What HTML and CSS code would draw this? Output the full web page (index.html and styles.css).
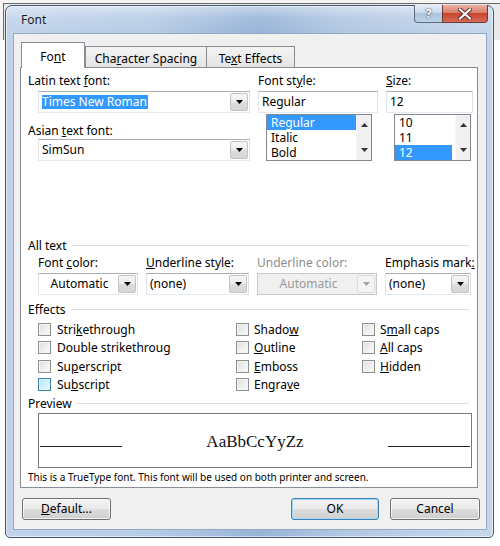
FILE: index.html
```html
<!DOCTYPE html>
<html>
<head>
<meta charset="utf-8">
<title>Font</title>
<link rel="stylesheet" href="styles.css">
</head>
<body>
<div class="behind"></div>
<div class="window">
  <div class="titlebar">
    <span class="title">Font</span>
    <div class="caps">
      <div class="cap help"><span>?</span></div>
      <div class="cap close">
        <svg width="14" height="12" viewBox="0 0 14 12"><path d="M2 1.5L12 10.5M12 1.5L2 10.5" stroke="#5a2a24" stroke-width="4" stroke-linecap="square"/><path d="M2 1.5L12 10.5M12 1.5L2 10.5" stroke="#fff" stroke-width="2.2" stroke-linecap="square"/></svg>
      </div>
    </div>
  </div>
  <div class="client">
    <div class="tabs">
      <div class="tab active">Fo<u>n</u>t</div>
      <div class="tab">Cha<u>r</u>acter Spacing</div>
      <div class="tab tab-last">Te<u>x</u>t Effects</div>
    </div>
    <div class="page">
      <div class="top-grid">
        <div class="col">
          <div class="lbl">Latin text <u>f</u>ont:</div>
          <div class="combo combo-indent">
            <div class="val"><span class="sel">Times New Roman</span></div>
            <div class="dd"><svg width="7" height="4" viewBox="0 0 7 4"><path d="M0 0h7L3.5 4z" fill="#000"/></svg></div>
          </div>
          <div class="lbl lbl-gap">Asian <u>t</u>ext font:</div>
          <div class="combo combo-indent combo-tight">
            <div class="val">SimSun</div>
            <div class="dd"><svg width="7" height="4" viewBox="0 0 7 4"><path d="M0 0h7L3.5 4z" fill="#000"/></svg></div>
          </div>
        </div>
        <div class="col">
          <div class="lbl">Font st<u>y</u>le:</div>
          <div class="textbox">Regular</div>
          <div class="list list-style">
            <div class="items">
              <div class="item on">Regular</div>
              <div class="item">Italic</div>
              <div class="item">Bold</div>
            </div>
            <div class="sb">
              <svg width="7" height="4" viewBox="0 0 7 4"><path d="M0 4h7L3.5 0z" fill="#333"/></svg>
              <svg width="7" height="4" viewBox="0 0 7 4"><path d="M0 0h7L3.5 4z" fill="#333"/></svg>
            </div>
          </div>
        </div>
        <div class="col">
          <div class="lbl"><u>S</u>ize:</div>
          <div class="textbox">12</div>
          <div class="list list-size">
            <div class="items">
              <div class="item">10</div>
              <div class="item">11</div>
              <div class="item on">12</div>
            </div>
            <div class="sb">
              <svg width="7" height="4" viewBox="0 0 7 4"><path d="M0 4h7L3.5 0z" fill="#333"/></svg>
              <svg width="7" height="4" viewBox="0 0 7 4"><path d="M0 0h7L3.5 4z" fill="#333"/></svg>
            </div>
          </div>
        </div>
      </div>

      <div class="ghead ghead-all"><span>All text</span></div>
      <div class="all-grid">
        <div class="field">
          <div class="lbl">Font <u>c</u>olor:</div>
          <div class="combo">
            <div class="val center">Automatic</div>
            <div class="dd"><svg width="7" height="4" viewBox="0 0 7 4"><path d="M0 0h7L3.5 4z" fill="#000"/></svg></div>
          </div>
        </div>
        <div class="field">
          <div class="lbl"><u>U</u>nderline style:</div>
          <div class="combo">
            <div class="val">(none)</div>
            <div class="dd"><svg width="7" height="4" viewBox="0 0 7 4"><path d="M0 0h7L3.5 4z" fill="#000"/></svg></div>
          </div>
        </div>
        <div class="field">
          <div class="lbl disabled">Underline color:</div>
          <div class="combo combo-disabled">
            <div class="val center">Automatic</div>
            <div class="dd"><svg width="7" height="4" viewBox="0 0 7 4"><path d="M0 0h7L3.5 4z" fill="#a0a0a0"/></svg></div>
          </div>
        </div>
        <div class="field">
          <div class="lbl">Emphasis mark<u>:</u></div>
          <div class="combo">
            <div class="val">(none)</div>
            <div class="dd"><svg width="7" height="4" viewBox="0 0 7 4"><path d="M0 0h7L3.5 4z" fill="#000"/></svg></div>
          </div>
        </div>
      </div>

      <div class="ghead ghead-effects"><span>Effects</span></div>
      <div class="fx-grid">
        <div class="chk"><span class="box"></span><span class="cl">Stri<u>k</u>ethrough</span></div>
        <div class="chk"><span class="box"></span><span class="cl">Shado<u>w</u></span></div>
        <div class="chk"><span class="box"></span><span class="cl">S<u>m</u>all caps</span></div>
        <div class="chk"><span class="box"></span><span class="cl">Double strikethroug</span></div>
        <div class="chk"><span class="box"></span><span class="cl"><u>O</u>utline</span></div>
        <div class="chk"><span class="box"></span><span class="cl"><u>A</u>ll caps</span></div>
        <div class="chk"><span class="box"></span><span class="cl">Su<u>p</u>erscript</span></div>
        <div class="chk"><span class="box"></span><span class="cl"><u>E</u>mboss</span></div>
        <div class="chk"><span class="box"></span><span class="cl"><u>H</u>idden</span></div>
        <div class="chk"><span class="box hot"></span><span class="cl">Su<u>b</u>script</span></div>
        <div class="chk"><span class="box"></span><span class="cl">Engra<u>v</u>e</span></div>
      </div>

      <div class="ghead ghead-preview"><span>Preview</span></div>
      <div class="preview">
        <span class="pv-line"></span>
        <span class="pv-text">AaBbCcYyZz</span>
        <span class="pv-line"></span>
      </div>
      <div class="note">This is a TrueType font. This font will be used on both printer and screen.</div>
    </div>

    <div class="buttons">
      <div class="btn"><u>D</u>efault...</div>
      <div class="btn-group">
        <div class="btn btn-ok">OK</div>
        <div class="btn btn-cancel">Cancel</div>
      </div>
    </div>
  </div>
</div>
</body>
</html>
```

FILE: styles.css
```css
* { box-sizing: border-box; }
html, body { margin: 0; padding: 0; }
body {
  width: 500px;
  height: 546px;
  overflow: hidden;
  background: #ffffff;
  font-family: "Noto Sans", "Open Sans", sans-serif;
  font-size: 12px;
  color: #000;
  position: relative;
  padding-top: 5px;
}
u { text-decoration: underline; text-underline-offset: 1px; }

/* a second window lying behind the dialog */
.behind {
  position: absolute;
  left: 0;
  top: 0;
  width: 500px;
  height: 40px;
  background: #e9e9e9;
  border-top: 3px solid #f4f4f4;
  border-left: 3px solid #f4f4f4;
  box-shadow: inset 1px 1px 0 #6a6a6a;
}

/* window frame */
.window {
  position: relative;
  margin-left: 5px;
  width: 489px;
  height: 533px;
  border: 1px solid #44566c;
  border-radius: 7px 7px 5px 5px;
  padding: 0 6px 7px 7px;
  display: flex;
  flex-direction: column;
  background:
    linear-gradient(180deg, rgba(255,255,255,0.45) 0px, rgba(255,255,255,0.1) 12px, rgba(255,255,255,0) 26px),
    linear-gradient(90deg, #c0d3ea 0%, #b7cce6 30%, #98b4d8 52%, #b3c8e3 70%, #c6d7ec 100%);
  box-shadow: inset 0 0 0 1px rgba(255,255,255,0.55);
}

.titlebar {
  height: 27px;
  display: flex;
  align-items: flex-start;
  flex: none;
}
.title {
  margin: 6px 0 0 8px;
  line-height: 16px;
  font-size: 12px;
  color: #1b1b1b;
  text-shadow: 0 0 6px rgba(255,255,255,0.9);
}
.caps {
  margin: -1px -1px 0 auto;
  display: flex;
}
.cap {
  height: 18px;
  display: flex;
  align-items: center;
  justify-content: center;
}
.help {
  width: 28px;
  border: 1px solid #5a6d86;
  border-right: none;
  border-top: none;
  border-radius: 0 0 0 4px;
  background: linear-gradient(180deg, #e6eef8 0%, #c9d8ea 45%, #aec3dd 50%, #bcd0e6 100%);
  color: #fff;
  font-weight: bold;
  font-size: 12px;
  text-shadow: 0 0 2px #3a4a60, 0 0 1px #3a4a60;
}
.close {
  width: 46px;
  border: 1px solid #6b3a36;
  border-top: none;
  border-radius: 0 0 4px 0;
  background: linear-gradient(180deg, #eab1a3 0%, #d9806d 45%, #c8452e 50%, #d66a55 100%);
}

/* client area */
.client {
  flex: 1;
  background: #f0f0f0;
  border: 1px solid #94a8bf;
  display: flex;
  flex-direction: column;
}

.tabs {
  display: flex;
  align-items: flex-end;
  height: 25px;
  margin: 8px 0 0 6px;
  flex: none;
}
.tab {
  height: 21px;
  border: 1px solid #898c95;
  border-bottom: none;
  background: linear-gradient(180deg, #f4f4f4, #e4e4e4);
  text-align: center;
  line-height: 15px;
  padding-top: 4px;
  white-space: nowrap;
}
.tab:nth-child(2) { width: 122px; }
.tab-last { width: 89px; margin-left: -1px; }
.tab.active {
  width: 64px;
  height: 26px;
  margin-left: 1px;
  margin-bottom: -1px;
  padding-top: 6px;
  background: #fff;
  position: relative;
  z-index: 1;
}

.page {
  margin-left: 6px;
  width: 458px;
  height: 421px;
  border: 1px solid #898c95;
  background: #fff;
  padding: 5px 4px 0 7px;
  flex: none;
}

.lbl {
  line-height: 15px;
  height: 15px;
  white-space: nowrap;
}
.lbl.disabled { color: #8d8d8d; }

.top-grid {
  display: grid;
  grid-template-columns: 222px 120px 87px;
  column-gap: 8px;
}
.col { display: flex; flex-direction: column; }
.lbl-gap { margin-top: 10px; }

.combo {
  height: 22px;
  margin-top: 3px;
  border: 1px solid #abadb3;
  border-color: #abadb3 #dbdfe6 #e3e9ef #e2e3ea;
  background: #fff;
  display: flex;
}
.combo-indent { margin-left: 10px; }
.combo-tight { margin-top: 1px; }
.combo .val {
  flex: 1;
  padding-left: 3px;
  line-height: 20px;
  white-space: nowrap;
  overflow: hidden;
}
.combo .val.center { text-align: center; }
.sel {
  background: #3399ff;
  color: #fff;
  padding: 0 1px 0 0;
  display: inline-block;
  line-height: 14px;
}
.combo .dd {
  width: 18px;
  margin: 1px;
  border: 1px solid #c3c3c3;
  border-radius: 2px;
  background: linear-gradient(180deg, #f6f6f6 0%, #ebebeb 50%, #dddddd 51%, #d6d6d6 100%);
  display: flex;
  align-items: center;
  justify-content: center;
}
.combo-disabled {
  background: #f0f0f0;
  border-color: #c8c8c8;
  color: #9a9a9a;
}
.combo-disabled .dd {
  background: #f4f4f4;
  border-color: #dcdcdc;
}

.textbox {
  height: 22px;
  margin-top: 3px;
  border: 1px solid #abadb3;
  border-color: #abadb3 #dbdfe6 #e3e9ef #e2e3ea;
  padding-left: 3px;
  line-height: 20px;
}

.list {
  margin: 1px 0 0 8px;
  height: 47px;
  border: 1px solid #828790;
  display: flex;
}
.list-style { width: 106px; }
.list-size { width: 77px; }
.list .items { flex: 1; }
.list-size .items { margin-right: 3px; }
.item {
  height: 15px;
  line-height: 15px;
  padding-left: 4px;
  white-space: nowrap;
  overflow: hidden;
}
.item.on { background: #3399ff; color: #fff; }
.sb {
  width: 15px;
  background: #f0f0f0;
  display: flex;
  flex-direction: column;
  align-items: center;
  justify-content: space-between;
  padding: 8px 0 8px;
  border-left: 1px solid #f7f7f7;
}

/* group headings */
.ghead {
  display: flex;
  align-items: center;
  gap: 5px;
  line-height: 15px;
  height: 15px;
  margin-right: 4px;
}
.ghead::after {
  content: "";
  flex: 1;
  height: 1px;
  background: #d5dfe5;
}
.ghead-all { margin-top: 77px; }
.ghead-effects { margin-top: 7px; }
.ghead-preview { margin-top: 2px; }

.all-grid {
  display: grid;
  grid-template-columns: 100px 103px 120px 86px;
  column-gap: 8px;
  margin: 2px 0 0 10px;
}

.fx-grid {
  display: grid;
  grid-template-columns: 198px 126px 1fr;
  grid-auto-rows: 18.5px;
  margin: 3px 0 0 10px;
}
.chk {
  display: flex;
  align-items: center;
  gap: 5px;
  white-space: nowrap;
}
.chk:nth-child(3n+1) { gap: 6px; }
.cl { line-height: 15px; }
.box {
  width: 13px;
  height: 13px;
  flex: none;
  border: 1px solid #8e8f8f;
  background: linear-gradient(135deg, #dcdcdc 0%, #eeeeee 50%, #fbfbfb 100%);
  box-shadow: inset 0 0 0 1px #f4f4f4;
}
.box.hot {
  border-color: #3c7fb1;
  background: linear-gradient(135deg, #b9e6f9 0%, #d7f2fd 60%, #eaf9ff 100%);
  box-shadow: inset 0 0 0 1px #def6ff;
}

.preview {
  margin: 2px 0 0 10px;
  width: 434px;
  height: 55px;
  border: 1px solid #7a7a7a;
  background: #fff;
  display: flex;
  align-items: baseline;
  justify-content: space-between;
  padding: 19px 1px 0 1px;
}
.pv-line {
  width: 82px;
  height: 1px;
  background: #222;
}
.pv-text {
  font-family: "Liberation Serif", "Times New Roman", serif;
  font-size: 17px;
  line-height: 17px;
  color: #111;
}

.note {
  margin-top: 3px;
  font-size: 10px;
  line-height: 13px;
  white-space: nowrap;
}

/* buttons */
.buttons {
  display: flex;
  justify-content: space-between;
  margin-top: 10px;
  padding: 0 6px 0 8px;
}
.btn-group { display: flex; gap: 11px; }
.btn {
  width: 89px;
  height: 22px;
  border: 1px solid #707070;
  border-radius: 3px;
  background: linear-gradient(180deg, #f2f2f2 0%, #ebebeb 48%, #dddddd 52%, #cfcfcf 100%);
  box-shadow: inset 0 0 0 1px rgba(255,255,255,0.7);
  text-align: center;
  line-height: 20px;
}
.btn-ok {
  width: 88px;
  border-color: #3c7fb1;
  box-shadow: inset 0 0 0 1px #9fdcf5;
}
.btn-cancel { width: 90px; }
```
